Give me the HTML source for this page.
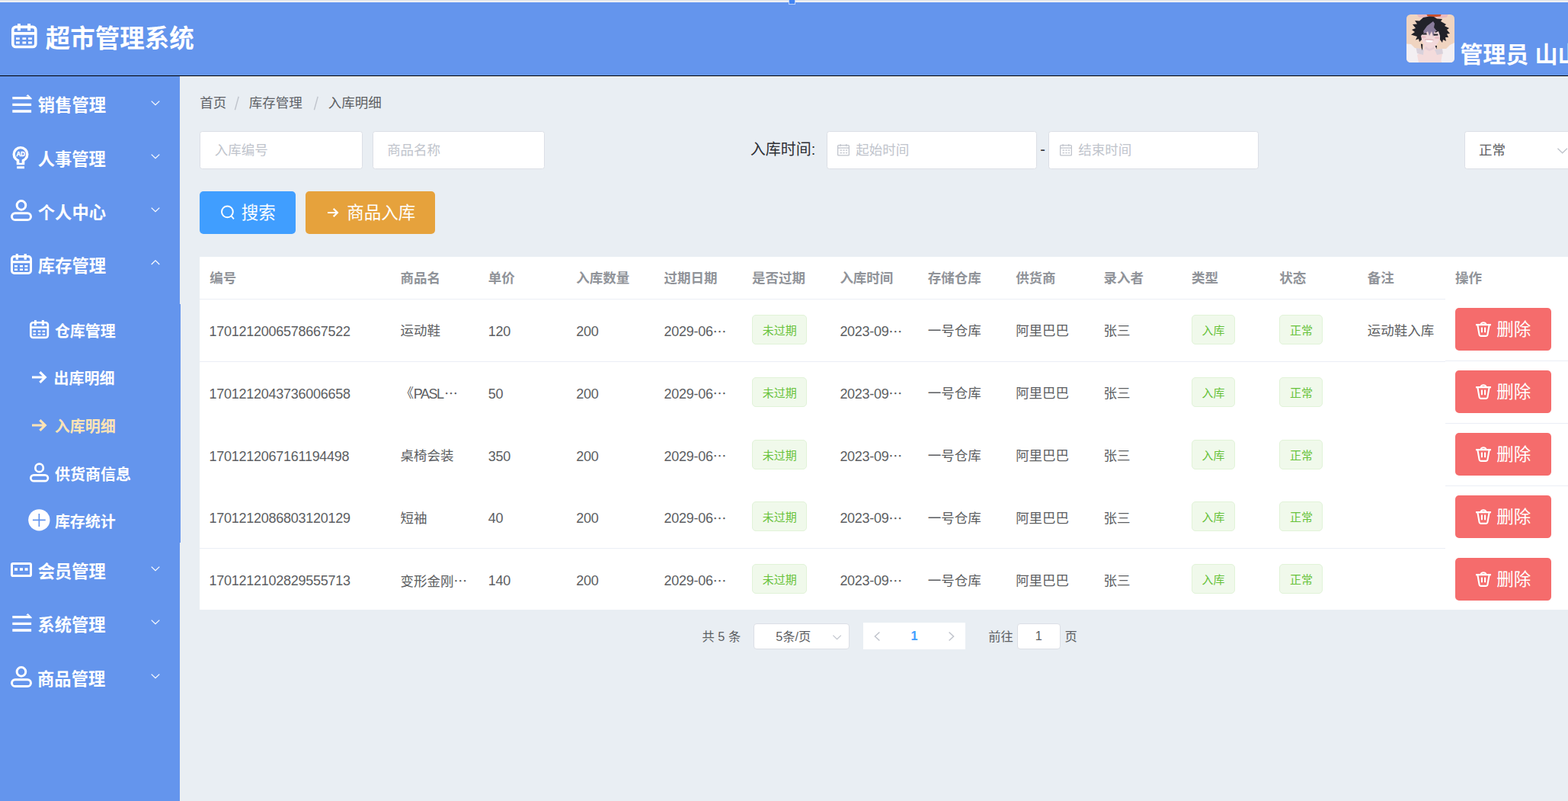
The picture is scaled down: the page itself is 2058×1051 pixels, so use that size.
<!DOCTYPE html>
<html lang="zh-CN"><head><meta charset="utf-8"><title>超市管理系统</title><style>
*{margin:0;padding:0}
html,body{width:2058px;height:1051px;overflow:hidden}
body{position:relative;background:#e9eef3;font-family:"Liberation Sans","Noto Sans CJK SC",sans-serif}
body div,body svg.i,.a{position:absolute}
svg.i{overflow:visible;display:block}
.a{line-height:1;white-space:pre;font-family:"Liberation Sans","Noto Sans CJK SC",sans-serif;font-weight:400}
.cj{font-family:"Noto Sans CJK SC",sans-serif}
h1{font-size:inherit;font-weight:inherit}
.strip{left:0;top:0;width:2058px;height:2px;background:#e6e8eb}
.strip2{left:0;top:2px;width:2058px;height:1px;background:#fafbfd}
</style></head><body><svg width="0" height="0" style="position:absolute" aria-hidden="true"><symbol id="i-date" viewBox="0 0 28 27" overflow="visible"><rect x="1.5" y="3.6" width="25" height="21.8" rx="3.2" fill="none" stroke="currentColor" stroke-width="3"/><path fill="currentColor" d="M6.7 0h3.2v7.7h-3.2zM17.6 0h3.3v7.7h-3.3zM1.5 9.2h25v3.1h-25zM5 15.1h4v2.3h-4zM12 15.1h4v2.3h-4zM18.4 15.1h4v2.3h-4zM5 19.6h4v2.4h-4zM12 19.6h4v2.4h-4zM18.4 19.6h4v2.4h-4z"/></symbol><symbol id="i-date-s" viewBox="0 0 16 15.6" overflow="visible"><rect x=".65" y="1.65" width="14.7" height="13.3" rx=".9" fill="none" stroke="currentColor" stroke-width="1.3"/><path fill="currentColor" d="M3.5 0h1.2v3h-1.2zM11.2 0h1.2v3h-1.2zM.65 4.5h14.7v1.15h-14.7zM3.5 7.5h2.6v1.2h-2.6zM7.3 7.5h2.4v1.2h-2.4zM10.9 7.5h2.2v1.2h-2.2zM3.5 11h2.6v1.2h-2.6zM7.3 11h2.4v1.2h-2.4zM10.9 11h2.2v1.2h-2.2z"/></symbol><symbol id="i-op" viewBox="0 0 26 24" overflow="visible"><path fill="currentColor" d="M.3 3.05H22.2L18.2 1.9 20.6 0 25.7 5.1V6.35H.3zM.3 11.7H25.1V15H.3zM.3 20.35H25.1V23.65H.3z"/></symbol><symbol id="i-bulb" viewBox="0 0 22 30" overflow="visible"><circle cx="11" cy="10.4" r="8.8" fill="none" stroke="currentColor" stroke-width="3.4"/><path fill="currentColor" d="M5.7 17.6H16.3V24.2H5.7zM6.2 26.2H16V29.2H6.2z"/><path fill="#6495ed" d="M9.3 15.2H12.7V21.7H9.3zM6.6 15.4L9.3 17.6V15z M15.4 15.4L12.7 17.6V15z"/><text x="10.9" y="13.3" text-anchor="middle" font-family="Liberation Sans,sans-serif" font-weight="700" font-size="8.4" fill="currentColor" stroke="currentColor" stroke-width=".35" letter-spacing="-.35">AD</text></symbol><symbol id="i-user" viewBox="0 0 28 28" overflow="visible"><circle cx="13.95" cy="7.4" r="5.8" fill="none" stroke="currentColor" stroke-width="3"/><rect x="1.5" y="17.8" width="25" height="8.7" rx="4.35" fill="none" stroke="currentColor" stroke-width="3"/></symbol><symbol id="i-msg" viewBox="0 0 28 19" overflow="visible"><rect x="1.5" y="1.5" width="25" height="16" rx="1.6" fill="none" stroke="currentColor" stroke-width="3"/><path fill="currentColor" d="M5 7.2h4v3.6h-4zM12 7.2h4v3.6h-4zM18.6 7.2h4v3.6h-4z"/></symbol><symbol id="i-right" viewBox="0 0 19 16" overflow="visible"><path fill="none" stroke="currentColor" stroke-width="3.1" d="M0 8H17M10.3 1.2L17.3 8L10.3 14.8"/></symbol><symbol id="i-right-s" viewBox="0 0 14 12" overflow="visible"><path fill="none" stroke="currentColor" stroke-width="2.2" d="M0 6H12.8M7.7 .9L12.9 6L7.7 11.1"/></symbol><symbol id="i-plus" viewBox="0 0 29 29" overflow="visible"><circle cx="14.5" cy="14.5" r="14.3" fill="currentColor"/><path fill="none" stroke="#6495ed" stroke-width="1.7" d="M6 14.6H23M14.5 6V23.3"/></symbol><symbol id="i-search" viewBox="0 0 19 20" overflow="visible"><circle cx="8.4" cy="8.9" r="7.4" fill="none" stroke="currentColor" stroke-width="1.9"/><path fill="none" stroke="currentColor" stroke-width="1.9" d="M13.7 14.5L16.9 18.3"/></symbol><symbol id="i-del" viewBox="0 0 20 20" overflow="visible"><path fill="none" stroke="currentColor" stroke-width="2.1" d="M0 4.1H20M6.6 3.6C6.6 .5 13.4 .5 13.4 3.6M2.4 4.6L4.6 17.1C4.8 18.3 5.4 18.9 6.4 18.9H13.6C14.6 18.9 15.2 18.3 15.4 17.1L17.6 4.6M7.9 7.6V14.2M12.1 7.6V14.2"/></symbol><symbol id="i-down" viewBox="0 0 12 7" overflow="visible"><path fill="none" stroke="currentColor" stroke-width="1.25" d="M.4 .6L6 6.1L11.6 .6"/></symbol><symbol id="i-up" viewBox="0 0 12 7" overflow="visible"><path fill="none" stroke="currentColor" stroke-width="1.25" d="M.4 6.4L6 .9L11.6 6.4"/></symbol><symbol id="i-lt" viewBox="0 0 8 12" overflow="visible"><path fill="none" stroke="currentColor" stroke-width="1.5" d="M7.4 .5L1.4 6L7.4 11.5"/></symbol><symbol id="i-gt" viewBox="0 0 8 12" overflow="visible"><path fill="none" stroke="currentColor" stroke-width="1.5" d="M.6 .5L6.6 6L.6 11.5"/></symbol></svg>
<div class="strip"></div><div class="strip2"></div>
<header>
<div class="hd" style="left:0px;top:3px;width:2058px;height:96px;background:#6495ed"></div>
<div style="left:0px;top:99px;width:2058px;height:1px;background:#000"></div>
<div style="left:1035px;top:0px;width:9px;height:6px;background:#4285f4;border:1px solid #bcd2fa;border-top:0;box-sizing:border-box"></div>
<svg class="i" style="left:14.7px;top:31.2px;width:33.6px;height:32.5px;color:#fff" aria-hidden="true"><use href="#i-date"/></svg>
<h1 class="a" style="left:59.68px;top:30.35px;font-size:32.5px;line-height:42.25px;color:#fff;font-weight:700">超市管理系统</h1>
<svg class="i" style="left:1846px;top:19px;width:63px;height:63px" viewBox="0 0 63 63" role="img" aria-label="头像">
<defs><clipPath id="avc"><rect width="63" height="63" rx="5.5"/></clipPath><filter id="avb" x="-10%" y="-10%" width="120%" height="120%"><feGaussianBlur stdDeviation=".55"/></filter></defs>
<g clip-path="url(#avc)"><rect width="63" height="63" fill="#f0d4c0"/><g filter="url(#avb)">
<path fill="#eab9bd" d="M13 -1H55L53 3.4 43 5 35 3.6 26 5.4 16 3.6z"/><path fill="#c9502e" d="M26 -1H46L44.6 2.4 36 3.2 27.6 2.6z"/>
<path fill="#f3eff2" d="M0 38.6L6 39 11 44 17 45 23 50 17 63H0zM63 37L57 40 52 45 45 45 40 50 46 63H63z"/>
<path fill="#f4dcdc" d="M23 38L38 39 40 48 47 52 45 63H16L14 53 22 48z"/>
<path fill="#d9d1db" d="M12.6 44L22.8 45.5 22 53 14 51zM37 46L47 45 48 51.4 40 53z"/>
<path fill="#e7cfd6" d="M24 45L30 48 37 45 36 42 25 42z"/>
<path fill="#f2d8da" d="M19 27C19 20 27 16 34 17 41 18 45 23 44 30 43 37 38 43 30 45 24 42 19 35 19 27z"/>
<path fill="#f8eeee" d="M33.6 15L39 16 41 21.4 36 21z"/>
<ellipse cx="22.6" cy="29.6" rx="3" ry="1.7" fill="#e8b4be" opacity=".7"/><ellipse cx="40" cy="30.4" rx="3" ry="1.7" fill="#e8b4be" opacity=".7"/>
<path fill="#23222a" d="M22 4L30 2.5 36 3 40 5.5 47 6 45 9 52 13 50 15 56 18 53 20 57 25 53 25.5 55 30 51 30 52 35 48 33 47 37 44 33 44 28 42 22 38 24 36 18 31 17 26 20 22 25 19 28 20 33 17 36 16 32 12 33.5 14 29 6 26.5 11 23 7 20 12 18 8 13 14 12.5 11 8 17 8.5z"/>
<path fill="#8a7b9c" d="M22 22L27 15 35 9 37 12 36 17 40 22 37 22 35 29 33 22 30 28 28 22 24 26z"/>
<path fill="#23222a" d="M18.9 38.6L21.2 39 21 47.2 19.6 44zM37.6 41L40 41 39.4 45.6zM20.4 24.8L26.4 24.4 26.8 26.6 21 26.6zM35.3 25.6L41.3 25.4 41.5 27.4 35.8 27.7z"/>
<path fill="#fff" d="M24.3 33.5L35.3 34 33 36.5 27 36.3z"/><path fill="none" stroke="#c58a93" stroke-width=".6" d="M24 33.3C28 32.5 32 32.7 35.6 33.8"/>
</g></g></svg>
<span class="a" style="left:1916.16px;top:51.97px;font-size:30px;line-height:39px;color:#fff;font-weight:700">管理员</span><span class="a" style="left:2006.16px;top:49.97px;font-size:30px;line-height:43px;color:#fff;font-weight:700"> </span><span class="a" style="left:2014.49px;top:51.97px;font-size:30px;line-height:39px;color:#fff;font-weight:700">山山</span>
</header>
<nav>
<div style="left:0px;top:100px;width:236px;height:951px;background:#6495ed"></div>
<div style="left:236px;top:100px;width:1px;height:951px;background:#edeff1"></div>
<div style="left:236px;top:399px;width:1px;height:313px;background:#6495ed"></div>
<svg class="i" style="left:15.5px;top:123.5px;width:26px;height:24px;color:#fff" aria-hidden="true"><use href="#i-op"/></svg>
<span class="a" style="left:49.85px;top:125.47px;font-size:22.3px;line-height:28.99px;color:#fff;font-weight:700">销售管理</span>
<svg class="i" style="left:198.2px;top:131.7px;width:12px;height:6.6px;color:#fff" aria-hidden="true"><use href="#i-down"/></svg>
<svg class="i" style="left:15.8px;top:191.9px;width:22px;height:30px;color:#fff" aria-hidden="true"><use href="#i-bulb"/></svg>
<span class="a" style="left:49.68px;top:195.77px;font-size:22.3px;line-height:28.99px;color:#fff;font-weight:700">人事管理</span>
<svg class="i" style="left:198.2px;top:202px;width:12px;height:6.6px;color:#fff" aria-hidden="true"><use href="#i-down"/></svg>
<svg class="i" style="left:14px;top:261.9px;width:28px;height:28px;color:#fff" aria-hidden="true"><use href="#i-user"/></svg>
<span class="a" style="left:49.79px;top:265.77px;font-size:22.3px;line-height:28.99px;color:#fff;font-weight:700">个人中心</span>
<svg class="i" style="left:198.2px;top:272px;width:12px;height:6.6px;color:#fff" aria-hidden="true"><use href="#i-down"/></svg>
<svg class="i" style="left:14px;top:333px;width:28px;height:27px;color:#fff" aria-hidden="true"><use href="#i-date"/></svg>
<span class="a" style="left:49.83px;top:335.97px;font-size:22.3px;line-height:28.99px;color:#fff;font-weight:700">库存管理</span>
<svg class="i" style="left:198.2px;top:341.4px;width:12px;height:6.6px;color:#fff" aria-hidden="true"><use href="#i-up"/></svg>
<svg class="i" style="left:14px;top:738px;width:28px;height:19px;color:#fff" aria-hidden="true"><use href="#i-msg"/></svg>
<span class="a" style="left:49.7px;top:736.87px;font-size:22.3px;line-height:28.99px;color:#fff;font-weight:700">会员管理</span>
<svg class="i" style="left:198.2px;top:743.1px;width:12px;height:6.6px;color:#fff" aria-hidden="true"><use href="#i-down"/></svg>
<svg class="i" style="left:15.5px;top:805.1px;width:26px;height:24px;color:#fff" aria-hidden="true"><use href="#i-op"/></svg>
<span class="a" style="left:49.45px;top:807.07px;font-size:22.3px;line-height:28.99px;color:#fff;font-weight:700">系统管理</span>
<svg class="i" style="left:198.2px;top:813.3px;width:12px;height:6.6px;color:#fff" aria-hidden="true"><use href="#i-down"/></svg>
<svg class="i" style="left:14px;top:874px;width:28px;height:28px;color:#fff" aria-hidden="true"><use href="#i-user"/></svg>
<span class="a" style="left:49.07px;top:877.87px;font-size:22.3px;line-height:28.99px;color:#fff;font-weight:700">商品管理</span>
<svg class="i" style="left:198.2px;top:884.1px;width:12px;height:6.6px;color:#fff" aria-hidden="true"><use href="#i-down"/></svg>
<svg class="i" style="left:39.3px;top:419.8px;width:25.2px;height:24.3px;color:#fff" aria-hidden="true"><use href="#i-date"/></svg>
<span class="a" style="left:71.88px;top:421.6px;font-size:20px;line-height:26px;color:#fff;font-weight:700">仓库管理</span>
<svg class="i" style="left:41.9px;top:487.2px;width:19px;height:16px;color:#fff" aria-hidden="true"><use href="#i-right"/></svg>
<span class="a" style="left:70.6px;top:484.1px;font-size:20px;line-height:26px;color:#fff;font-weight:700">出库明细</span>
<svg class="i" style="left:41.9px;top:549.9px;width:19px;height:16px;color:#ffe4b5" aria-hidden="true"><use href="#i-right"/></svg>
<span class="a" style="left:71.66px;top:546.8px;font-size:20px;line-height:26px;color:#ffe4b5;font-weight:700">入库明细</span>
<svg class="i" style="left:38.9px;top:606.9px;width:25.3px;height:25.7px;color:#fff" aria-hidden="true"><use href="#i-user"/></svg>
<span class="a" style="left:72px;top:609.6px;font-size:20px;line-height:26px;color:#fff;font-weight:700">供货商信息</span>
<svg class="i" style="left:37.2px;top:668.4px;width:28.7px;height:28.7px;color:#fff" aria-hidden="true"><use href="#i-plus"/></svg>
<span class="a" style="left:71.88px;top:672px;font-size:20px;line-height:26px;color:#fff;font-weight:700">库存统计</span>
</nav>
<main>
<span class="a" style="left:262.36px;top:123.75px;font-size:17.5px;line-height:22.75px;color:#5f6368">首页</span>
<span class="a" style="left:326.76px;top:123.75px;font-size:17.5px;line-height:22.75px;color:#5f6368">库存管理</span>
<span class="a" style="left:430.68px;top:123.75px;font-size:17.5px;line-height:22.75px;color:#5c5e62">入库明细</span>
<svg class="i" style="left:307.4px;top:126px;width:8px;height:19px" viewBox="0 0 8 19" aria-hidden="true"><path d="M6.2 .8L1.4 18.2" stroke="#c0c4cc" stroke-width="1.4" fill="none"/></svg>
<svg class="i" style="left:411.2px;top:126px;width:8px;height:19px" viewBox="0 0 8 19" aria-hidden="true"><path d="M6.2 .8L1.4 18.2" stroke="#c0c4cc" stroke-width="1.4" fill="none"/></svg>
<div class="inp" style="left:262px;top:172px;width:213.5px;height:49.7px;background:#fff;border:1px solid #dcdfe6;border-radius:3.5px;box-sizing:border-box"></div>
<span class="a" style="left:281.78px;top:185.55px;font-size:17.5px;line-height:22.75px;color:#c0c4cc">入库编号</span>
<div class="inp" style="left:489.3px;top:172px;width:225.3px;height:49.7px;background:#fff;border:1px solid #dcdfe6;border-radius:3.5px;box-sizing:border-box"></div>
<span class="a" style="left:508.13px;top:185.55px;font-size:17.5px;line-height:22.75px;color:#c0c4cc">商品名称</span>
<span class="a" style="left:984.78px;top:183.2px;font-size:20px;line-height:26px;color:#2d2f33">入库时间:</span>
<div class="inp" style="left:1085px;top:172px;width:276px;height:49.7px;background:#fff;border:1px solid #dcdfe6;border-radius:3.5px;box-sizing:border-box"></div>
<svg class="i" style="left:1098.7px;top:189px;width:16px;height:15.6px;color:#c0c4cc" aria-hidden="true"><use href="#i-date-s"/></svg>
<span class="a" style="left:1123.35px;top:185.55px;font-size:17.5px;line-height:22.75px;color:#c0c4cc">起始时间</span>
<span class="a" style="left:1365.2px;top:179.6px;font-size:20px;line-height:32px;color:#2d2f33">-</span>
<div class="inp" style="left:1376px;top:172px;width:276px;height:49.7px;background:#fff;border:1px solid #dcdfe6;border-radius:3.5px;box-sizing:border-box"></div>
<svg class="i" style="left:1390.9px;top:189px;width:16px;height:15.6px;color:#c0c4cc" aria-hidden="true"><use href="#i-date-s"/></svg>
<span class="a" style="left:1415.27px;top:185.55px;font-size:17.5px;line-height:22.75px;color:#c0c4cc">结束时间</span>
<div class="inp" style="left:1922.3px;top:172px;width:200px;height:49.7px;background:#fff;border:1px solid #dcdfe6;border-radius:3.5px;box-sizing:border-box"></div>
<span class="a" style="left:1941.09px;top:185.55px;font-size:17.5px;line-height:22.75px;color:#5c5e62">正常</span>
<svg class="i" style="left:2043.6px;top:193.6px;width:13.4px;height:7.8px;color:#c0c4cc" aria-hidden="true"><use href="#i-down"/></svg>
<div class="btn" style="left:262px;top:251px;width:126px;height:55.6px;background:#409eff;border-radius:5px"></div>
<svg class="i" style="left:289.8px;top:268.9px;width:19px;height:20px;color:#fff" aria-hidden="true"><use href="#i-search"/></svg>
<span class="a" style="left:316.82px;top:264.75px;font-size:22.5px;line-height:29.25px;color:#fff">搜索</span>
<div class="btn" style="left:401.2px;top:251px;width:169.8px;height:55.6px;background:#e6a23c;border-radius:5px"></div>
<svg class="i" style="left:429.9px;top:272.8px;width:14px;height:12px;color:#fff" aria-hidden="true"><use href="#i-right-s"/></svg>
<span class="a" style="left:455.33px;top:264.75px;font-size:22.5px;line-height:29.25px;color:#fff">商品入库</span>
<div style="left:262px;top:337px;width:1796px;height:463px;background:#fff"></div>
<div style="left:262px;top:392px;width:1635px;height:1px;background:#ebeef5"></div>
<div style="left:262px;top:474px;width:1635px;height:1px;background:#ebeef5"></div>
<div style="left:262px;top:719px;width:1635px;height:1px;background:#ebeef5"></div>
<div style="left:1897px;top:473px;width:161px;height:1px;background:#ebeef5"></div>
<div style="left:1897px;top:555px;width:161px;height:1px;background:#ebeef5"></div>
<div style="left:1897px;top:637px;width:161px;height:1px;background:#ebeef5"></div>
<span class="a" style="left:275.2px;top:354.35px;font-size:17.5px;line-height:22.75px;color:#909399;font-weight:700">编号</span>
<span class="a" style="left:525.48px;top:354.35px;font-size:17.5px;line-height:22.75px;color:#909399;font-weight:700">商品名</span>
<span class="a" style="left:640.86px;top:354.35px;font-size:17.5px;line-height:22.75px;color:#909399;font-weight:700">单价</span>
<span class="a" style="left:756.24px;top:354.35px;font-size:17.5px;line-height:22.75px;color:#909399;font-weight:700">入库数量</span>
<span class="a" style="left:871.62px;top:354.35px;font-size:17.5px;line-height:22.75px;color:#909399;font-weight:700">过期日期</span>
<span class="a" style="left:987px;top:354.35px;font-size:17.5px;line-height:22.75px;color:#909399;font-weight:700">是否过期</span>
<span class="a" style="left:1102.38px;top:354.35px;font-size:17.5px;line-height:22.75px;color:#909399;font-weight:700">入库时间</span>
<span class="a" style="left:1217.76px;top:354.35px;font-size:17.5px;line-height:22.75px;color:#909399;font-weight:700">存储仓库</span>
<span class="a" style="left:1333.14px;top:354.35px;font-size:17.5px;line-height:22.75px;color:#909399;font-weight:700">供货商</span>
<span class="a" style="left:1448.52px;top:354.35px;font-size:17.5px;line-height:22.75px;color:#909399;font-weight:700">录入者</span>
<span class="a" style="left:1563.9px;top:354.35px;font-size:17.5px;line-height:22.75px;color:#909399;font-weight:700">类型</span>
<span class="a" style="left:1679.28px;top:354.35px;font-size:17.5px;line-height:22.75px;color:#909399;font-weight:700">状态</span>
<span class="a" style="left:1794.66px;top:354.35px;font-size:17.5px;line-height:22.75px;color:#909399;font-weight:700">备注</span>
<span class="a" style="left:1910.04px;top:354.35px;font-size:17.5px;line-height:22.75px;color:#909399;font-weight:700">操作</span>
<span class="a" style="left:274.6px;top:420px;font-size:18px;line-height:30px;color:#5c5e62;letter-spacing:-0.27px">1701212006578667522</span>
<span class="a" style="left:525.48px;top:423.35px;font-size:17.5px;line-height:22.75px;color:#5c5e62">运动鞋</span>
<span class="a" style="left:640.66px;top:420px;font-size:18px;line-height:30px;color:#5c5e62;letter-spacing:-0.27px">120</span>
<span class="a" style="left:756.24px;top:420px;font-size:18px;line-height:30px;color:#5c5e62;letter-spacing:-0.27px">200</span>
<span class="a" style="left:871.62px;top:420px;font-size:18px;line-height:30px;color:#5c5e62;letter-spacing:-0.27px">2029-06</span><span class="a" style="left:935.79px;top:423.5px;font-size:17.5px;line-height:22.75px;color:#5c5e62"><span class="cj">…</span></span>
<div class="tag" style="left:987px;top:413px;width:72px;height:39px;background:#f0f9eb;border:1px solid #e1f3d8;border-radius:5px;box-sizing:border-box"></div>
<span class="a" style="left:1000.79px;top:423.9px;font-size:15px;line-height:19.5px;color:#67c23a">未过期</span>
<span class="a" style="left:1102.38px;top:420px;font-size:18px;line-height:30px;color:#5c5e62;letter-spacing:-0.27px">2023-09</span><span class="a" style="left:1166.55px;top:423.5px;font-size:17.5px;line-height:22.75px;color:#5c5e62"><span class="cj">…</span></span>
<span class="a" style="left:1217.76px;top:423.35px;font-size:17.5px;line-height:22.75px;color:#5c5e62">一号仓库</span>
<span class="a" style="left:1333.14px;top:423.35px;font-size:17.5px;line-height:22.75px;color:#5c5e62">阿里巴巴</span>
<span class="a" style="left:1448.52px;top:423.35px;font-size:17.5px;line-height:22.75px;color:#5c5e62">张三</span>
<div class="tag" style="left:1563.9px;top:413px;width:57px;height:39px;background:#f0f9eb;border:1px solid #e1f3d8;border-radius:5px;box-sizing:border-box"></div>
<span class="a" style="left:1577.44px;top:423.9px;font-size:15px;line-height:19.5px;color:#67c23a">入库</span>
<div class="tag" style="left:1679.28px;top:413px;width:57px;height:39px;background:#f0f9eb;border:1px solid #e1f3d8;border-radius:5px;box-sizing:border-box"></div>
<span class="a" style="left:1692.98px;top:423.9px;font-size:15px;line-height:19.5px;color:#67c23a">正常</span>
<span class="a" style="left:1794.66px;top:423.35px;font-size:17.5px;line-height:22.75px;color:#5c5e62">运动鞋入库</span>
<div class="btn" style="left:1910px;top:403.8px;width:126px;height:56.4px;background:#f56c6c;border-radius:5px"></div>
<svg class="i" style="left:1937px;top:422.2px;width:20px;height:20px;color:#fff" aria-hidden="true"><use href="#i-del"/></svg>
<span class="a" style="left:1964.32px;top:417.85px;font-size:22.5px;line-height:29.25px;color:#fff">删除</span>
<span class="a" style="left:274.6px;top:501.8px;font-size:18px;line-height:30px;color:#5c5e62;letter-spacing:-0.27px">1701212043736006658</span>
<span class="a" style="left:525.48px;top:505.15px;font-size:17.5px;line-height:22.75px;color:#5c5e62">《</span>
<span class="a" style="left:542.78px;top:501.8px;font-size:18px;line-height:30px;color:#5c5e62;letter-spacing:-1.5px">PASL</span>
<span class="a" style="left:583.18px;top:505.15px;font-size:17.5px;line-height:22.75px;color:#5c5e62"><span class="cj">…</span></span>
<span class="a" style="left:640.66px;top:501.8px;font-size:18px;line-height:30px;color:#5c5e62;letter-spacing:-0.27px">50</span>
<span class="a" style="left:756.24px;top:501.8px;font-size:18px;line-height:30px;color:#5c5e62;letter-spacing:-0.27px">200</span>
<span class="a" style="left:871.62px;top:501.8px;font-size:18px;line-height:30px;color:#5c5e62;letter-spacing:-0.27px">2029-06</span><span class="a" style="left:935.79px;top:505.3px;font-size:17.5px;line-height:22.75px;color:#5c5e62"><span class="cj">…</span></span>
<div class="tag" style="left:987px;top:494.8px;width:72px;height:39px;background:#f0f9eb;border:1px solid #e1f3d8;border-radius:5px;box-sizing:border-box"></div>
<span class="a" style="left:1000.79px;top:505.7px;font-size:15px;line-height:19.5px;color:#67c23a">未过期</span>
<span class="a" style="left:1102.38px;top:501.8px;font-size:18px;line-height:30px;color:#5c5e62;letter-spacing:-0.27px">2023-09</span><span class="a" style="left:1166.55px;top:505.3px;font-size:17.5px;line-height:22.75px;color:#5c5e62"><span class="cj">…</span></span>
<span class="a" style="left:1217.76px;top:505.15px;font-size:17.5px;line-height:22.75px;color:#5c5e62">一号仓库</span>
<span class="a" style="left:1333.14px;top:505.15px;font-size:17.5px;line-height:22.75px;color:#5c5e62">阿里巴巴</span>
<span class="a" style="left:1448.52px;top:505.15px;font-size:17.5px;line-height:22.75px;color:#5c5e62">张三</span>
<div class="tag" style="left:1563.9px;top:494.8px;width:57px;height:39px;background:#f0f9eb;border:1px solid #e1f3d8;border-radius:5px;box-sizing:border-box"></div>
<span class="a" style="left:1577.44px;top:505.7px;font-size:15px;line-height:19.5px;color:#67c23a">入库</span>
<div class="tag" style="left:1679.28px;top:494.8px;width:57px;height:39px;background:#f0f9eb;border:1px solid #e1f3d8;border-radius:5px;box-sizing:border-box"></div>
<span class="a" style="left:1692.98px;top:505.7px;font-size:15px;line-height:19.5px;color:#67c23a">正常</span>
<div class="btn" style="left:1910px;top:485.8px;width:126px;height:56.4px;background:#f56c6c;border-radius:5px"></div>
<svg class="i" style="left:1937px;top:504.2px;width:20px;height:20px;color:#fff" aria-hidden="true"><use href="#i-del"/></svg>
<span class="a" style="left:1964.32px;top:499.85px;font-size:22.5px;line-height:29.25px;color:#fff">删除</span>
<span class="a" style="left:274.6px;top:583.6px;font-size:18px;line-height:30px;color:#5c5e62;letter-spacing:-0.27px">1701212067161194498</span>
<span class="a" style="left:525.48px;top:586.95px;font-size:17.5px;line-height:22.75px;color:#5c5e62">桌椅会装</span>
<span class="a" style="left:640.66px;top:583.6px;font-size:18px;line-height:30px;color:#5c5e62;letter-spacing:-0.27px">350</span>
<span class="a" style="left:756.24px;top:583.6px;font-size:18px;line-height:30px;color:#5c5e62;letter-spacing:-0.27px">200</span>
<span class="a" style="left:871.62px;top:583.6px;font-size:18px;line-height:30px;color:#5c5e62;letter-spacing:-0.27px">2029-06</span><span class="a" style="left:935.79px;top:587.1px;font-size:17.5px;line-height:22.75px;color:#5c5e62"><span class="cj">…</span></span>
<div class="tag" style="left:987px;top:576.6px;width:72px;height:39px;background:#f0f9eb;border:1px solid #e1f3d8;border-radius:5px;box-sizing:border-box"></div>
<span class="a" style="left:1000.79px;top:587.5px;font-size:15px;line-height:19.5px;color:#67c23a">未过期</span>
<span class="a" style="left:1102.38px;top:583.6px;font-size:18px;line-height:30px;color:#5c5e62;letter-spacing:-0.27px">2023-09</span><span class="a" style="left:1166.55px;top:587.1px;font-size:17.5px;line-height:22.75px;color:#5c5e62"><span class="cj">…</span></span>
<span class="a" style="left:1217.76px;top:586.95px;font-size:17.5px;line-height:22.75px;color:#5c5e62">一号仓库</span>
<span class="a" style="left:1333.14px;top:586.95px;font-size:17.5px;line-height:22.75px;color:#5c5e62">阿里巴巴</span>
<span class="a" style="left:1448.52px;top:586.95px;font-size:17.5px;line-height:22.75px;color:#5c5e62">张三</span>
<div class="tag" style="left:1563.9px;top:576.6px;width:57px;height:39px;background:#f0f9eb;border:1px solid #e1f3d8;border-radius:5px;box-sizing:border-box"></div>
<span class="a" style="left:1577.44px;top:587.5px;font-size:15px;line-height:19.5px;color:#67c23a">入库</span>
<div class="tag" style="left:1679.28px;top:576.6px;width:57px;height:39px;background:#f0f9eb;border:1px solid #e1f3d8;border-radius:5px;box-sizing:border-box"></div>
<span class="a" style="left:1692.98px;top:587.5px;font-size:15px;line-height:19.5px;color:#67c23a">正常</span>
<div class="btn" style="left:1910px;top:567.8px;width:126px;height:56.4px;background:#f56c6c;border-radius:5px"></div>
<svg class="i" style="left:1937px;top:586.2px;width:20px;height:20px;color:#fff" aria-hidden="true"><use href="#i-del"/></svg>
<span class="a" style="left:1964.32px;top:581.85px;font-size:22.5px;line-height:29.25px;color:#fff">删除</span>
<span class="a" style="left:274.6px;top:665.4px;font-size:18px;line-height:30px;color:#5c5e62;letter-spacing:-0.27px">1701212086803120129</span>
<span class="a" style="left:525.48px;top:668.75px;font-size:17.5px;line-height:22.75px;color:#5c5e62">短袖</span>
<span class="a" style="left:640.66px;top:665.4px;font-size:18px;line-height:30px;color:#5c5e62;letter-spacing:-0.27px">40</span>
<span class="a" style="left:756.24px;top:665.4px;font-size:18px;line-height:30px;color:#5c5e62;letter-spacing:-0.27px">200</span>
<span class="a" style="left:871.62px;top:665.4px;font-size:18px;line-height:30px;color:#5c5e62;letter-spacing:-0.27px">2029-06</span><span class="a" style="left:935.79px;top:668.9px;font-size:17.5px;line-height:22.75px;color:#5c5e62"><span class="cj">…</span></span>
<div class="tag" style="left:987px;top:658.4px;width:72px;height:39px;background:#f0f9eb;border:1px solid #e1f3d8;border-radius:5px;box-sizing:border-box"></div>
<span class="a" style="left:1000.79px;top:669.3px;font-size:15px;line-height:19.5px;color:#67c23a">未过期</span>
<span class="a" style="left:1102.38px;top:665.4px;font-size:18px;line-height:30px;color:#5c5e62;letter-spacing:-0.27px">2023-09</span><span class="a" style="left:1166.55px;top:668.9px;font-size:17.5px;line-height:22.75px;color:#5c5e62"><span class="cj">…</span></span>
<span class="a" style="left:1217.76px;top:668.75px;font-size:17.5px;line-height:22.75px;color:#5c5e62">一号仓库</span>
<span class="a" style="left:1333.14px;top:668.75px;font-size:17.5px;line-height:22.75px;color:#5c5e62">阿里巴巴</span>
<span class="a" style="left:1448.52px;top:668.75px;font-size:17.5px;line-height:22.75px;color:#5c5e62">张三</span>
<div class="tag" style="left:1563.9px;top:658.4px;width:57px;height:39px;background:#f0f9eb;border:1px solid #e1f3d8;border-radius:5px;box-sizing:border-box"></div>
<span class="a" style="left:1577.44px;top:669.3px;font-size:15px;line-height:19.5px;color:#67c23a">入库</span>
<div class="tag" style="left:1679.28px;top:658.4px;width:57px;height:39px;background:#f0f9eb;border:1px solid #e1f3d8;border-radius:5px;box-sizing:border-box"></div>
<span class="a" style="left:1692.98px;top:669.3px;font-size:15px;line-height:19.5px;color:#67c23a">正常</span>
<div class="btn" style="left:1910px;top:649.8px;width:126px;height:56.4px;background:#f56c6c;border-radius:5px"></div>
<svg class="i" style="left:1937px;top:668.2px;width:20px;height:20px;color:#fff" aria-hidden="true"><use href="#i-del"/></svg>
<span class="a" style="left:1964.32px;top:663.85px;font-size:22.5px;line-height:29.25px;color:#fff">删除</span>
<span class="a" style="left:274.6px;top:747.2px;font-size:18px;line-height:30px;color:#5c5e62;letter-spacing:-0.27px">1701212102829555713</span>
<span class="a" style="left:525.48px;top:750.55px;font-size:17.5px;line-height:22.75px;color:#5c5e62">变形金刚<span class="cj">…</span></span>
<span class="a" style="left:640.66px;top:747.2px;font-size:18px;line-height:30px;color:#5c5e62;letter-spacing:-0.27px">140</span>
<span class="a" style="left:756.24px;top:747.2px;font-size:18px;line-height:30px;color:#5c5e62;letter-spacing:-0.27px">200</span>
<span class="a" style="left:871.62px;top:747.2px;font-size:18px;line-height:30px;color:#5c5e62;letter-spacing:-0.27px">2029-06</span><span class="a" style="left:935.79px;top:750.7px;font-size:17.5px;line-height:22.75px;color:#5c5e62"><span class="cj">…</span></span>
<div class="tag" style="left:987px;top:740.2px;width:72px;height:39px;background:#f0f9eb;border:1px solid #e1f3d8;border-radius:5px;box-sizing:border-box"></div>
<span class="a" style="left:1000.79px;top:751.1px;font-size:15px;line-height:19.5px;color:#67c23a">未过期</span>
<span class="a" style="left:1102.38px;top:747.2px;font-size:18px;line-height:30px;color:#5c5e62;letter-spacing:-0.27px">2023-09</span><span class="a" style="left:1166.55px;top:750.7px;font-size:17.5px;line-height:22.75px;color:#5c5e62"><span class="cj">…</span></span>
<span class="a" style="left:1217.76px;top:750.55px;font-size:17.5px;line-height:22.75px;color:#5c5e62">一号仓库</span>
<span class="a" style="left:1333.14px;top:750.55px;font-size:17.5px;line-height:22.75px;color:#5c5e62">阿里巴巴</span>
<span class="a" style="left:1448.52px;top:750.55px;font-size:17.5px;line-height:22.75px;color:#5c5e62">张三</span>
<div class="tag" style="left:1563.9px;top:740.2px;width:57px;height:39px;background:#f0f9eb;border:1px solid #e1f3d8;border-radius:5px;box-sizing:border-box"></div>
<span class="a" style="left:1577.44px;top:751.1px;font-size:15px;line-height:19.5px;color:#67c23a">入库</span>
<div class="tag" style="left:1679.28px;top:740.2px;width:57px;height:39px;background:#f0f9eb;border:1px solid #e1f3d8;border-radius:5px;box-sizing:border-box"></div>
<span class="a" style="left:1692.98px;top:751.1px;font-size:15px;line-height:19.5px;color:#67c23a">正常</span>
<div class="btn" style="left:1910px;top:731.8px;width:126px;height:56.4px;background:#f56c6c;border-radius:5px"></div>
<svg class="i" style="left:1937px;top:750.2px;width:20px;height:20px;color:#fff" aria-hidden="true"><use href="#i-del"/></svg>
<span class="a" style="left:1964.32px;top:745.85px;font-size:22.5px;line-height:29.25px;color:#fff">删除</span>
<span class="a" style="left:921.62px;top:824.72px;font-size:16.25px;line-height:21.12px;color:#5c5e62">共 5 条</span>
<div class="inp" style="left:989.4px;top:818px;width:125.2px;height:34.4px;background:#fff;border:1px solid #dcdfe6;border-radius:4px;box-sizing:border-box"></div>
<span class="a" style="left:1018.15px;top:820.97px;font-size:16.25px;line-height:28px;color:#5c5e62">5</span><span class="a" style="left:1027.19px;top:824.72px;font-size:16.25px;line-height:21.12px;color:#5c5e62">条</span><span class="a" style="left:1043.44px;top:820.97px;font-size:16.25px;line-height:28px;color:#5c5e62">/</span><span class="a" style="left:1047.95px;top:824.72px;font-size:16.25px;line-height:21.12px;color:#5c5e62">页</span>
<svg class="i" style="left:1093.4px;top:833.2px;width:11.2px;height:6.5px;color:#c0c4cc" aria-hidden="true"><use href="#i-down"/></svg>
<div style="left:1132.8px;top:816.6px;width:134.2px;height:35.4px;background:#fff"></div>
<svg class="i" style="left:1146.9px;top:829.2px;width:8px;height:12px;color:#c0c4cc" aria-hidden="true"><use href="#i-lt"/></svg>
<span class="a" style="left:1195.4px;top:819.99px;font-size:16.25px;line-height:28px;color:#409eff;font-weight:700">1</span>
<svg class="i" style="left:1244.8px;top:829.2px;width:8px;height:12px;color:#c0c4cc" aria-hidden="true"><use href="#i-gt"/></svg>
<span class="a" style="left:1297.34px;top:824.72px;font-size:16.25px;line-height:21.12px;color:#5c5e62">前往</span>
<div class="inp" style="left:1334.6px;top:818px;width:57px;height:34.4px;background:#fff;border:1px solid #dcdfe6;border-radius:4px;box-sizing:border-box"></div>
<span class="a" style="left:1358.86px;top:819.99px;font-size:16.25px;line-height:28px;color:#5c5e62">1</span>
<span class="a" style="left:1397.39px;top:824.72px;font-size:16.25px;line-height:21.12px;color:#5c5e62">页</span>
</main>
</body></html>
